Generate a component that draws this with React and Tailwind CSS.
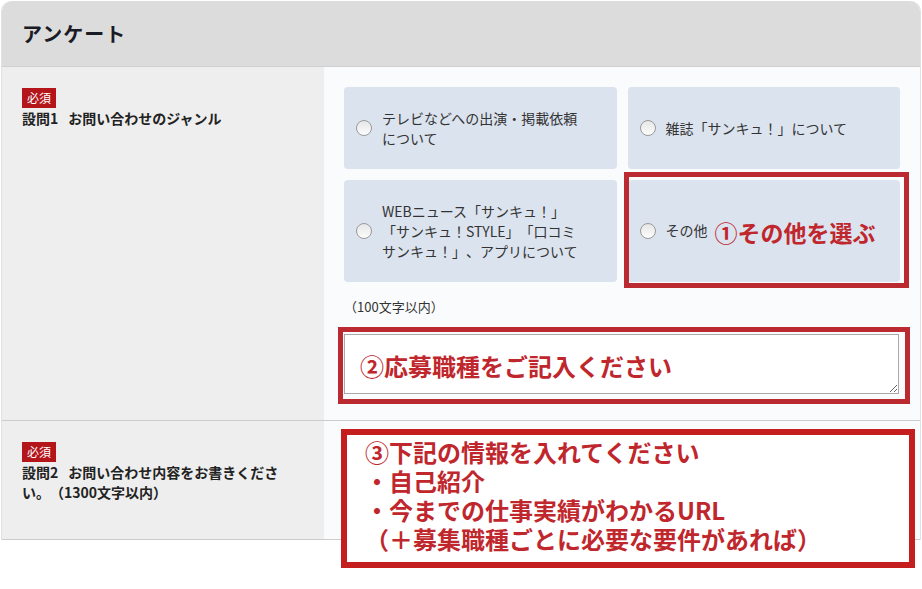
const font = { fontFamily: '"Noto Sans CJK JP", "Noto Sans", sans-serif' };

const Radio = () => (
  <span className="block w-4 h-4 shrink-0 rounded-full border border-[#9a9a9a] bg-gradient-to-b from-[#e6e6e6] to-[#fdfdfd]" />
);

const Badge = () => (
  <span className="block w-fit bg-[#b3151b] text-white text-[12px] leading-[20px] px-[5px]">必須</span>
);

const Card = ({ children, className = '' }) => (
  <label className={`flex items-center gap-[10px] rounded bg-[#dbe3ef] px-3 py-[21px] text-[14px] leading-[20px] text-[#333] ${className}`}>
    <Radio />
    <span>{children}</span>
  </label>
);

export default function App() {
  return (
    <div className="min-h-screen bg-white pt-px pl-px [text-spacing-trim:space-all]" style={font}>
      <div className="w-[920px] rounded-t-[10px] border-l border-r border-[#e2e2e2]">
        {/* header */}
        <div className="h-[66px] flex items-center px-5 bg-[#dcdcdc] rounded-t-[10px] border-b border-[#cfcfcf]">
          <h2 className="text-[20px] font-bold text-[#1b1b26] tracking-[1px]">アンケート</h2>
        </div>

        {/* question 1 */}
        <div className="flex border-b border-[#cccccc]">
          <div className="w-[322px] shrink-0 bg-[#eeeeee] pl-5 pr-10 pt-[21px]">
            <Badge />
            <p className="text-[14px] leading-[20px] font-bold text-[#222]">設問1<span className="ml-[10px]">お問い合わせのジャンル</span></p>
          </div>
          <div className="flex-1 bg-[#fafbfc] pl-5 pr-[20px] pt-5 pb-[26px]">
            <div className="grid grid-cols-2 gap-[11px]">
              <Card>
                テレビなどへの出演・掲載依頼<br />について
              </Card>
              <Card>雑誌「サンキュ！」について</Card>
              <Card>
                WEBニュース「サンキュ！」<br />「サンキュ！STYLE」「口コミ<br />サンキュ！」、アプリについて
              </Card>
              <div className="relative">
                <Card className="h-full">
                  その他
                  <span className="ml-[7px] text-[23px] font-bold text-[#c0272d] align-middle">①その他を選ぶ</span>
                </Card>
                <div className="absolute -left-[4px] -top-[8px] -right-[9px] -bottom-[6px] border-[5px] border-[#bb2a30] pointer-events-none" />
              </div>
            </div>

            <p className="mt-[15px] text-[13px] leading-[20px] text-[#333]">（100文字以内）</p>

            <div className="relative mt-[17px] mr-[1px]">
              <textarea className="block w-full h-[60px] border border-[#a9a9a9] bg-white" />
              <div className="absolute -left-[6px] -top-[7px] -right-[11px] -bottom-[10px] border-[5px] border-[#bb2a30] pointer-events-none flex items-center pl-[17px]">
                <span className="text-[24px] font-bold text-[#c0272d]">②応募職種をご記入ください</span>
              </div>
            </div>
          </div>
        </div>

        {/* question 2 */}
        <div className="flex border-b border-[#cccccc]">
          <div className="w-[322px] shrink-0 bg-[#eeeeee] pl-5 pr-10 pt-[21px] pb-[37px]">
            <Badge />
            <p className="text-[14px] leading-[20px] font-bold text-[#222]">設問2<span className="ml-[10px]">お問い合わせ内容をお書きください。（1300文字以内）</span></p>
          </div>
          <div className="relative flex-1 bg-[#fafbfc]">
            <div className="absolute left-[17px] top-[8px] w-[574px] h-[139px] border-[6px] border-[#c41e1e] bg-white pl-[18px] pt-[2px] text-[24px] leading-[29px] font-bold text-[#c0272d]">
              <p>③下記の情報を入れてください</p>
              <p>・自己紹介</p>
              <p>・今までの仕事実績がわかるURL</p>
              <p>（＋募集職種ごとに必要な要件があれば）</p>
            </div>
          </div>
        </div>
      </div>
    </div>
  );
}
